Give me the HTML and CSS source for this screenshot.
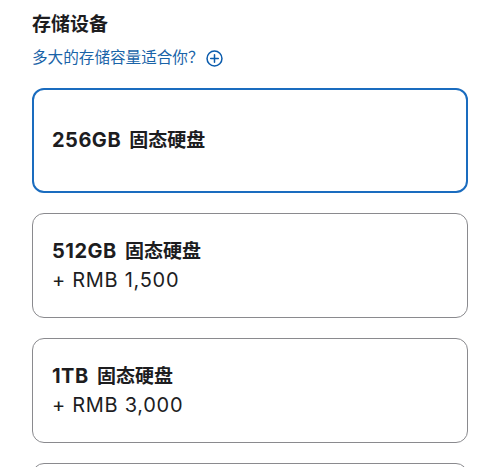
FILE: index.html
```html
<!DOCTYPE html>
<html lang="zh-CN">
<head>
<meta charset="utf-8">
<link rel="stylesheet" href="styles.css">
</head>
<body>
<main class="page">
  <h2 class="title">存储设备</h2>
  <a class="help" href="#">多大的存储容量适合你？<svg class="plus" width="17" height="17" viewBox="0 0 18 18"><circle cx="9" cy="9" r="7.9" fill="none" stroke="#0b5cad" stroke-width="1.6"/><path d="M9 5v8M5 9h8" stroke="#0b5cad" stroke-width="1.6" stroke-linecap="round"/></svg></a>
  <div class="options">
    <div class="card selected"><div class="name">256GB <span class="cjk">固态硬盘</span></div></div>
    <div class="card"><div class="name">512GB <span class="cjk">固态硬盘</span></div><div class="price">+ RMB 1,500</div></div>
    <div class="card"><div class="name">1TB <span class="cjk">固态硬盘</span></div><div class="price">+ RMB 3,000</div></div>
    <div class="card"><div class="name">2TB <span class="cjk">固态硬盘</span></div><div class="price">+ RMB 6,000</div></div>
  </div>
</main>
</body>
</html>
```

FILE: styles.css
```css
html, body {
  margin: 0;
  padding: 0;
  background: #fff;
  overflow: hidden;
}
body {
  font-family: Inter, "Noto Sans CJK SC", sans-serif;
  color: #1d1d1f;
}
.page {
  padding: 11px 32px 0 32px;
}
.title {
  margin: 0;
  font-size: 19px;
  line-height: 28px;
  font-weight: 700;
}
.help {
  display: flex;
  align-items: center;
  gap: 2px;
  margin-top: 9px;
  color: #1a64a8;
  text-decoration: none;
  font-size: 15.6px;
  line-height: 20px;
}
.plus {
  display: block;
}
.options {
  display: flex;
  flex-direction: column;
  gap: 20px;
  margin-top: 20px;
}
.card {
  box-sizing: border-box;
  min-height: 105px;
  border: 1px solid #8a8a8e;
  border-radius: 12px;
  padding: 0 19px;
  display: flex;
  flex-direction: column;
  justify-content: center;
}
.card.selected {
  border: 2px solid #1a6cbf;
  padding: 0 18px;
}
.name {
  font-size: 20px;
  line-height: 28px;
  font-weight: 700;
  letter-spacing: 0.5px;
}
.cjk {
  font-size: 19px;
  letter-spacing: 0;
  margin-left: 3px;
}
.price {
  font-size: 20px;
  line-height: 28px;
  font-weight: 400;
  letter-spacing: 0.7px;
}
```
